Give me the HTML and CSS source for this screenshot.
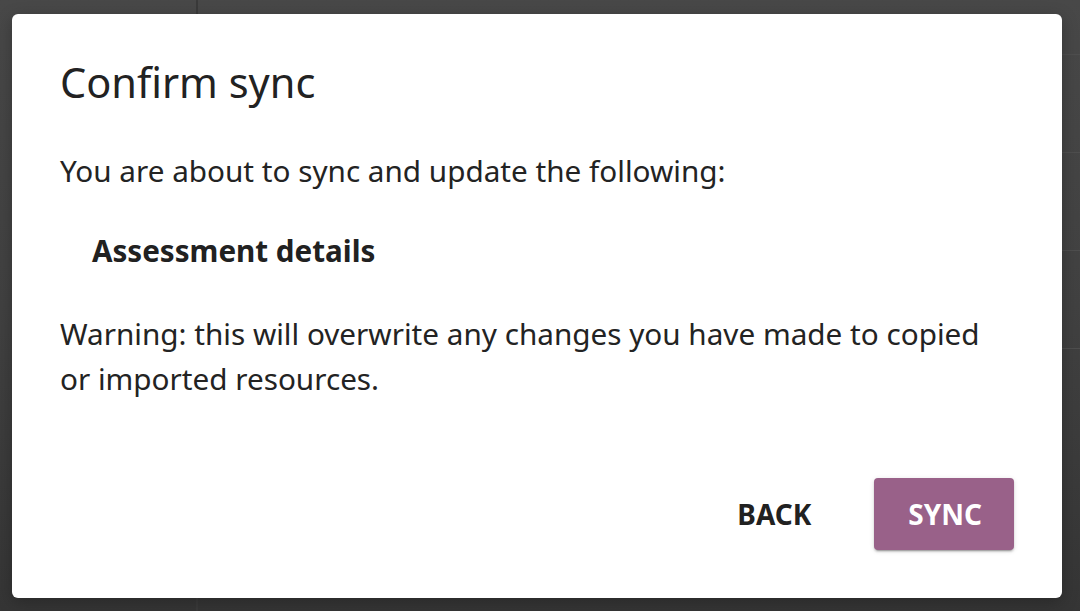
FILE: index.html
```html
<!DOCTYPE html>
<html lang="en">
<head>
<meta charset="utf-8">
<title>Confirm sync</title>
<link rel="stylesheet" href="styles.css">
</head>
<body>
  <div class="backdrop">
    <div class="modal" role="dialog" aria-labelledby="modal-title">
      <h1 class="modal-title" id="modal-title">Confirm sync</h1>
      <p class="modal-text">You are about to sync and update the following:</p>
      <p class="modal-item">Assessment details</p>
      <p class="modal-text warning">Warning: this will overwrite any changes you have made to copied or imported resources.</p>
      <div class="modal-actions">
        <button class="btn btn-flat" type="button">BACK</button>
        <button class="btn btn-raised" type="button">SYNC</button>
      </div>
    </div>
  </div>
</body>
</html>
```

FILE: styles.css
```css
html, body {
  margin: 0;
  padding: 0;
  height: 100%;
}

body {
  font-family: "Noto Sans", "Open Sans", sans-serif;
  color: #212121;
  background-color: #3d3d3d;
  background-image:
    linear-gradient(to right, transparent 196px, #3a3a3a 196px, #3a3a3a 198px, transparent 198px),
    linear-gradient(to bottom, #484848 0%, #414141 50%, #353535 100%);
  overflow: hidden;
}

.backdrop {
  box-sizing: border-box;
  height: 611px;
  padding: 14px 18px 13px 12px;
  background-image: repeating-linear-gradient(to bottom, transparent 0, transparent 76px, #4e4e4e 76px, #4e4e4e 77px, transparent 77px, transparent 98px);
  background-size: 18px 400px;
  background-position: right top -22px;
  background-repeat: no-repeat;
}

.modal {
  box-sizing: border-box;
  width: 1050px;
  height: 584px;
  background: #ffffff;
  border-radius: 6px;
  padding: 44px 48px 48px 48px;
  display: flex;
  flex-direction: column;
  box-shadow: 0 4px 16px rgba(0, 0, 0, 0.25);
}

.modal-title {
  margin: 0;
  font-size: 41.5px;
  line-height: 48px;
  font-weight: 400;
  color: #222222;
}

.modal-text {
  margin: 42px 0 0;
  font-size: 29.7px;
  line-height: 45px;
  font-weight: 400;
  color: #232323;
}

.modal-item {
  margin: 35px 0 0 32px;
  font-size: 29.6px;
  line-height: 45px;
  font-weight: 700;
}

.modal-text.warning {
  margin-top: 38px;
}

.modal-actions {
  margin-top: auto;
  display: flex;
  justify-content: flex-end;
  gap: 30px;
}

.btn {
  font-family: "Noto Sans", "Open Sans", sans-serif;
  font-size: 28px;
  font-weight: 700;
  line-height: 72px;
  height: 72px;
  padding: 0 33px 0 33px;
  border: 0;
  border-radius: 4px;
  cursor: pointer;
}

.btn-flat {
  background: transparent;
  color: #212121;
}

.btn-raised {
  background: #996189;
  color: #ffffff;
  padding: 0 32px 0 34px;
  box-shadow: 0 3px 1px -2px rgba(0, 0, 0, 0.2), 0 2px 2px 0 rgba(0, 0, 0, 0.14), 0 1px 5px 0 rgba(0, 0, 0, 0.12);
}
```
